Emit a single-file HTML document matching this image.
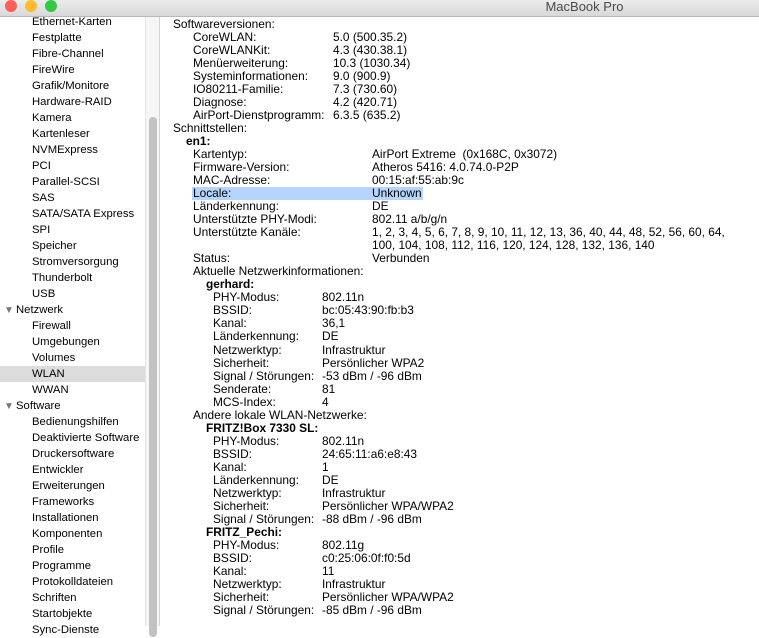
<!DOCTYPE html><html><head><style>
body{margin:0;width:759px;height:626px;overflow:hidden;background:#fff;font-family:"Liberation Sans",sans-serif;font-size:11px;color:#000;position:relative}
.tb{position:absolute;left:0;top:0;width:759px;height:16px;background:linear-gradient(#ececec,#d8d8d8);border-bottom:1px solid #b8b8b8;z-index:2}
.tb .t{position:absolute;left:0;right:0;text-align:center;top:-1px;font-size:13px;color:#4a4a4a;padding-left:410px}
.c{position:absolute;top:0px;width:12px;height:12px;border-radius:50%}
.sb{position:absolute;left:0;top:17px;width:145px;height:609px;background:#fff;font-size:11.3px}
.sb div{position:absolute;height:16px;line-height:16px;white-space:nowrap}
.tr{position:absolute;left:145px;top:17px;width:15px;height:609px;background:#f6f6f6;border-left:1px solid #e4e4e4;border-right:1px solid #d4d4d4;box-sizing:border-box}
.th{position:absolute;left:149px;top:117px;width:8px;height:520px;border-radius:4px;background:#c2c2c2}
.r{font-size:11.9px}
.r div{position:absolute;white-space:nowrap;line-height:13px}
.hl{position:absolute;left:192px;top:187px;width:231px;height:13px;background:#b5d5fc}
</style></head><body>
<div class="tb"><div class="c" style="left:5px;background:#fc5f57"></div><div class="c" style="left:25px;background:#fdbc2e"></div><div class="c" style="left:45px;background:#34c748"></div><div class="t">MacBook Pro</div></div>
<div class="sb" id="sb"></div>
<div class="tr"></div><div class="th"></div>
<div class="hl"></div>
<div class="r" id="r"></div>
<script>
var s=["Ethernet-Karten","Festplatte","Fibre-Channel","FireWire","Grafik/Monitore","Hardware-RAID","Kamera","Kartenleser","NVMExpress","PCI","Parallel-SCSI","SAS","SATA/SATA Express","SPI","Speicher","Stromversorgung","Thunderbolt","USB","#Netzwerk","Firewall","Umgebungen","Volumes","WLAN","WWAN","#Software","Bedienungshilfen","Deaktivierte Software","Druckersoftware","Entwickler","Erweiterungen","Frameworks","Installationen","Komponenten","Profile","Programme","Protokolldateien","Schriften","Startobjekte","Sync-Dienste"];
var h="";s.forEach(function(t,i){var y=i*16-3;if(t[0]=="#")h+='<div style="left:4px;top:'+y+'px"><span style="color:#777;font-size:10px;display:inline-block;width:12px">▼</span>'+t.slice(1)+'</div>';else{if(t=="WLAN")h+='<div style="left:0;top:'+(y)+'px;width:145px;background:#dcdcdc"></div>';h+='<div style="left:32px;top:'+y+'px">'+t+'</div>';}});
document.getElementById("sb").innerHTML=h;
var R=[[173,"Softwareversionen:"],[193,"CoreWLAN:",333,"5.0 (500.35.2)"],[193,"CoreWLANKit:",333,"4.3 (430.38.1)"],[193,"Menüerweiterung:",333,"10.3 (1030.34)"],[193,"Systeminformationen:",333,"9.0 (900.9)"],[193,"IO80211-Familie:",333,"7.3 (730.60)"],[193,"Diagnose:",333,"4.2 (420.71)"],[193,"AirPort-Dienstprogramm:",333,"6.3.5 (635.2)"],[173,"Schnittstellen:"],[186,"<b>en1:</b>"],
[193,"Kartentyp:",372,"AirPort Extreme&nbsp; (0x168C, 0x3072)"],[193,"Firmware-Version:",372,"Atheros 5416: 4.0.74.0-P2P"],[193,"MAC-Adresse:",372,"00:15:af:55:ab:9c"],[193,"Locale:",372,"Unknown"],[193,"Länderkennung:",372,"DE"],[193,"Unterstützte PHY-Modi:",372,"802.11 a/b/g/n"],[193,"Unterstützte Kanäle:",372,"1, 2, 3, 4, 5, 6, 7, 8, 9, 10, 11, 12, 13, 36, 40, 44, 48, 52, 56, 60, 64,"],[0,"",372,"100, 104, 108, 112, 116, 120, 124, 128, 132, 136, 140"],[193,"Status:",372,"Verbunden"],[193,"Aktuelle Netzwerkinformationen:"],[206,"<b>gerhard:</b>"],
[213,"PHY-Modus:",322,"802.11n"],[213,"BSSID:",322,"bc:05:43:90:fb:b3"],[213,"Kanal:",322,"36,1"],[213,"Länderkennung:",322,"DE"],[213,"Netzwerktyp:",322,"Infrastruktur"],[213,"Sicherheit:",322,"Persönlicher WPA2"],[213,"Signal / Störungen:",322,"-53 dBm / -96 dBm"],[213,"Senderate:",322,"81"],[213,"MCS-Index:",322,"4"],[193,"Andere lokale WLAN-Netzwerke:"],[206,"<b>FRITZ!Box 7330 SL:</b>"],
[213,"PHY-Modus:",322,"802.11n"],[213,"BSSID:",322,"24:65:11:a6:e8:43"],[213,"Kanal:",322,"1"],[213,"Länderkennung:",322,"DE"],[213,"Netzwerktyp:",322,"Infrastruktur"],[213,"Sicherheit:",322,"Persönlicher WPA/WPA2"],[213,"Signal / Störungen:",322,"-88 dBm / -96 dBm"],[206,"<b>FRITZ_Pechi:</b>"],
[213,"PHY-Modus:",322,"802.11g"],[213,"BSSID:",322,"c0:25:06:0f:f0:5d"],[213,"Kanal:",322,"11"],[213,"Netzwerktyp:",322,"Infrastruktur"],[213,"Sicherheit:",322,"Persönlicher WPA/WPA2"],[213,"Signal / Störungen:",322,"-85 dBm / -96 dBm"]];
h="";R.forEach(function(r,i){var y=Math.round(18+i*13.02);if(r[1])h+='<div style="left:'+r[0]+'px;top:'+y+'px">'+r[1]+'</div>';if(r[2])h+='<div style="left:'+r[2]+'px;top:'+y+'px">'+r[3]+'</div>';});
document.getElementById("r").innerHTML=h;
</script></body></html>
